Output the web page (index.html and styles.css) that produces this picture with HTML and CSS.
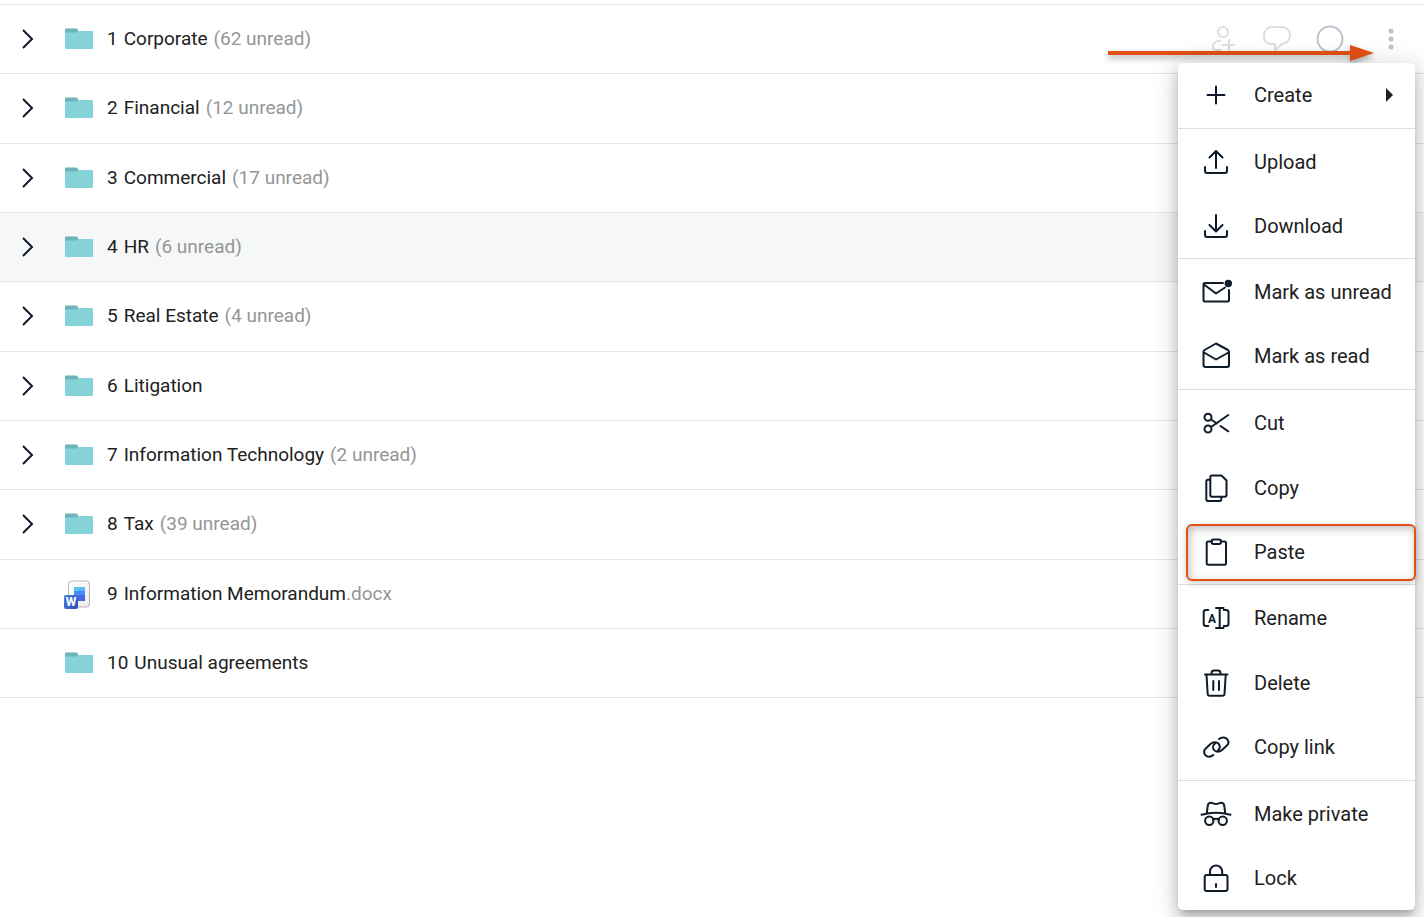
FILE: index.html
```
<!DOCTYPE html>
<html lang="en">
<head>
    <meta charset="UTF-8">
    <meta name="viewport" content="width=device-width, initial-scale=1.0">
    <title>Documents</title>
    <link rel="stylesheet" href="styles.css">
</head>
<body>
    <!-- Shared icons -->
    <svg class="sprite" aria-hidden="true">
        <symbol id="chevron" viewBox="0 0 12 20"><path d="M1 1l9 9-9 9" fill="none" stroke="#0f1a2b" stroke-width="2"/></symbol>
        <symbol id="folder" viewBox="0 0 30 22">
            <path d="M1 2h12l1 1h14a1 1 0 0 1 1 1v16a1 1 0 0 1-1 1H2a1 1 0 0 1-1-1z" fill="#84d3d9"/>
            <path d="M2 0.500h10a2 2 0 0 1 2 2v1l-2 1H1v-3a1 1 0 0 1 1-1z" fill="#6db4ba"/>
        </symbol>
    </svg>

    <!-- Folder list -->
    <ul class="list">
        <li class="row">
            <button class="toggle" aria-label="Expand"><svg><use href="#chevron"/></svg></button>
            <svg class="folder"><use href="#folder"/></svg>
            <span class="number">1</span><span class="name">Corporate</span><span class="unread">(62 unread)</span>
            <div class="actions">
                <button aria-label="Assign"><svg viewBox="0 0 28 28"><circle cx="13" cy="7" r="5"/><path d="M11 16H9c-4 0-6 3-6 6 0 2 1 3 3 3h5M19 14v13M12 20h13"/></svg></button>
                <button aria-label="Comment"><svg viewBox="0 0 28 28"><path d="M9 2h10a8 8 0 0 1 8 8c0 5-3 8-8 9l-7 6v-6H9a7 7 0 0 1-8-8c0-5 3-9 8-9z"/></svg></button>
                <button class="status" aria-label="Status"><svg viewBox="0 0 28 28"><circle cx="14" cy="14" r="12.5"/></svg></button>
                <button class="more" aria-label="More"><svg viewBox="0 0 28 28"><circle cx="14" cy="6" r="2.5"/><circle cx="14" cy="14" r="2.5"/><circle cx="14" cy="22" r="2.5"/></svg></button>
            </div>
        </li>
        <li class="row">
            <button class="toggle" aria-label="Expand"><svg><use href="#chevron"/></svg></button>
            <svg class="folder"><use href="#folder"/></svg>
            <span class="number">2</span><span class="name">Financial</span><span class="unread">(12 unread)</span>
        </li>
        <li class="row">
            <button class="toggle" aria-label="Expand"><svg><use href="#chevron"/></svg></button>
            <svg class="folder"><use href="#folder"/></svg>
            <span class="number">3</span><span class="name">Commercial</span><span class="unread">(17 unread)</span>
        </li>
        <li class="row active">
            <button class="toggle" aria-label="Expand"><svg><use href="#chevron"/></svg></button>
            <svg class="folder"><use href="#folder"/></svg>
            <span class="number">4</span><span class="name">HR</span><span class="unread">(6 unread)</span>
        </li>
        <li class="row">
            <button class="toggle" aria-label="Expand"><svg><use href="#chevron"/></svg></button>
            <svg class="folder"><use href="#folder"/></svg>
            <span class="number">5</span><span class="name">Real Estate</span><span class="unread">(4 unread)</span>
        </li>
        <li class="row">
            <button class="toggle" aria-label="Expand"><svg><use href="#chevron"/></svg></button>
            <svg class="folder"><use href="#folder"/></svg>
            <span class="number">6</span><span class="name">Litigation</span>
        </li>
        <li class="row">
            <button class="toggle" aria-label="Expand"><svg><use href="#chevron"/></svg></button>
            <svg class="folder"><use href="#folder"/></svg>
            <span class="number">7</span><span class="name">Information Technology</span><span class="unread">(2 unread)</span>
        </li>
        <li class="row">
            <button class="toggle" aria-label="Expand"><svg><use href="#chevron"/></svg></button>
            <svg class="folder"><use href="#folder"/></svg>
            <span class="number">8</span><span class="name">Tax</span><span class="unread">(39 unread)</span>
        </li>
        <li class="row">
            <span class="toggle"></span>
            <svg class="word" viewBox="0 0 30 30">
                <defs>
                    <linearGradient id="page" x1="0" y1="0" x2="1" y2="1"><stop offset="0" stop-color="#fff"/><stop offset="1" stop-color="#ececec"/></linearGradient>
                    <linearGradient id="badge" x1="0" y1="0" x2="1" y2="1"><stop offset="0" stop-color="#4b7de0"/><stop offset="1" stop-color="#2c4fb5"/></linearGradient>
                </defs>
                <rect x="4.5" y="2" width="21" height="26" rx="3" fill="url(#page)" stroke="#b5b5b5"/>
                <path d="M10 8h11v5H10z" fill="#58c4f8"/>
                <path d="M15 8h6v5h-6z" fill="#62b5fa"/>
                <path d="M10 12h11v5H10z" fill="#4a8cf5"/>
                <path d="M14 16h7v6h-7z" fill="#3f66ec"/>
                <rect x="0" y="16" width="14" height="14" rx="2" fill="url(#badge)"/>
                <text x="7" y="27" class="word-letter">W</text>
            </svg>
            <span class="number">9</span><span class="name">Information Memorandum</span><span class="ext">.docx</span>
        </li>
        <li class="row">
            <span class="toggle"></span>
            <svg class="folder"><use href="#folder"/></svg>
            <span class="number">10</span><span class="name">Unusual agreements</span>
        </li>
    </ul>

    <!-- Pointer to the row menu -->
    <svg class="arrow" viewBox="0 0 268 20" aria-hidden="true"><path d="M1 8h242V2l24 8-24 8v-6H1z" fill="#e25015"/></svg>

    <!-- Context menu -->
    <div class="menu" role="menu">
        <div class="group">
            <button class="item" role="menuitem"><svg viewBox="0 0 32 32"><path d="M16 7.500v17M7.500 16h17"/></svg>Create<span class="caret"></span></button>
        </div>
        <div class="group">
            <button class="item" role="menuitem"><svg viewBox="0 0 32 32"><path d="M16 22V5M9.500 11.500L16 5l6.500 6.500M5 21v4q0 2 2 2h18q2 0 2-2v-4"/></svg>Upload</button>
            <button class="item" role="menuitem"><svg viewBox="0 0 32 32"><path d="M16 5v16M9.500 15L16 21.500l6.500-6.500M5 21v4q0 2 2 2h18q2 0 2-2v-4"/></svg>Download</button>
        </div>
        <div class="group">
            <button class="item" role="menuitem"><svg viewBox="0 0 32 32"><path d="M23 7H5Q3.500 7 3.500 8.500v15.500q0 1.500 1.500 1.500h22.500q1.500 0 1.500-1.500V14M4 8.500l12 9 9-6"/><circle class="solid" cx="28.300" cy="7.500" r="3.700"/></svg>Mark as unread</button>
            <button class="item" role="menuitem"><svg viewBox="0 0 32 32"><path d="M16 3.500L4.500 10q-1 .6-1 2v13q0 2 2 2h21.500q2 0 2-2V12q0-1.400-1-2zM4 12.500l12 7 12.500-7"/></svg>Mark as read</button>
        </div>
        <div class="group">
            <button class="item" role="menuitem"><svg viewBox="0 0 32 32"><circle cx="8" cy="10.300" r="3.500"/><circle cx="8" cy="22" r="3.500"/><path d="M11 20L28.300 8M11 12.500l6 4M20.500 19l7.800 5.300"/></svg>Cut</button>
            <button class="item" role="menuitem"><svg viewBox="0 0 32 32"><path d="M12 3.500h9.500l5 5V23q0 1.700-1.700 1.700H12q-1.700 0-1.700-1.700V5.200q0-1.700 1.700-1.700zM10 7.700H8q-1.700 0-1.700 1.700v17.800q0 1.700 1.700 1.700h11.500q1.800 0 1.800-1.700V25"/></svg>Copy</button>
            <button class="item marked" role="menuitem"><svg viewBox="0 0 32 32"><path d="M12 5.500H8.200q-1.500 0-1.500 1.500v20.300q0 1.500 1.500 1.500h16.300q1.500 0 1.500-1.500V7q0-1.500-1.500-1.500H21"/><rect x="11.500" y="3.500" width="9.500" height="4.500" rx="2"/></svg>Paste</button>
        </div>
        <div class="group">
            <button class="item" role="menuitem"><svg viewBox="0 0 32 32"><path d="M8.300 8H6Q3.700 8 3.700 10.300v11.400Q3.700 24 6 24h2.300M23.700 8H26q2.500 0 2.500 2.300v11.400Q28.500 24 26 24h-2.300M19.700 6v20M16 6h7.500M16 26h7.500"/><text x="12" y="21" class="icon-letter">A</text></svg>Rename</button>
            <button class="item" role="menuitem"><svg viewBox="0 0 32 32"><path d="M5 7.500h22.500M11.500 7v-1q0-2.500 2.500-2.500h4q2.500 0 2.500 2.500v1M6.500 8l1.200 19q.1 1.800 2 1.800h12.800q1.900 0 2-1.800l1.200-19M13.300 14v9M19 14v9"/></svg>Delete</button>
            <button class="item" role="menuitem"><svg viewBox="0 0 32 32"><path d="M13.300 24C10.500 26.500 6.500 26 5 23.700 3.600 21.500 4 19 6 17.200l4.800-4.500c2.200-1.900 6.200-1.900 8 .3 1.700 2.500 1.200 5-1.300 7M19 8c2.500-2.200 6.500-2 8.300.3 1.700 2.200 1.300 4.700-.7 6.500l-4.800 4.500c-2.300 2-6 2-7.800-.3-1.700-2.200-1-5 1.200-6.800"/></svg>Copy link</button>
        </div>
        <div class="group">
            <button class="item" role="menuitem"><svg viewBox="0 0 32 32"><path d="M1.500 16.700q14.500-4 29 0M6.800 15l1-7.500q.4-2.800 3-2.800c2 0 3 1.300 5.200 1.300s3.200-1.300 5.200-1.300q2.600 0 3 2.800l1 7.500M13 21.500q3-1.500 6 0"/><circle cx="9.300" cy="22.700" r="4.200"/><circle cx="22.700" cy="22.700" r="4.200"/></svg>Make private</button>
            <button class="item" role="menuitem"><svg viewBox="0 0 32 32"><rect x="4.700" y="13" width="22.800" height="16" rx="2"/><path d="M10 13V9.500a6.100 6.100 0 0 1 12.200 0V13M16 22v3"/></svg>Lock</button>
        </div>
    </div>
</body>
</html>
```

FILE: styles.css
```
body {
    position: relative;
    box-sizing: border-box;
    min-height: 100vh;
    margin: 0;
    padding-top: 4px;
    font-family: Roboto, sans-serif;
    font-size: 19px;
    line-height: 24px;
    color: #212121;
    background-color: #fff;
}
button {
    padding: 0;
    border: none;
    background: none;
    font: inherit;
    color: inherit;
    cursor: pointer;
}
svg {
    display: block;
}
.sprite {
    position: absolute;
    width: 0;
    height: 0;
}

/* Folder list */
.list {
    margin: 0;
    padding: 0;
    list-style: none;
    border-top: 1px solid #e4e6e6;
}
.row {
    display: flex;
    align-items: center;
    box-sizing: border-box;
    height: 69px;
    padding: 0 20px;
    border-bottom: 1px solid #e4e6e6;
}
.row:nth-child(3n+2) {
    height: 70px;
    padding-bottom: 1px;
}
.row.active {
    background-color: #f6f8f8;
}
.toggle {
    width: 44px;
}
.toggle svg {
    width: 12px;
    height: 20px;
    margin-left: 2px;
}
.folder {
    width: 30px;
    height: 22px;
    margin-right: 13px;
}
.word {
    width: 30px;
    height: 30px;
    margin-right: 13px;
}
.word-letter {
    font-size: 12px;
    font-weight: 700;
    text-anchor: middle;
    fill: #fff;
}
.number {
    margin-right: 6px;
}
.unread {
    margin-left: 6px;
}
.unread,
.ext {
    color: #949696;
}
.actions {
    display: flex;
    gap: 25px;
    margin-left: auto;
}
.actions svg {
    width: 28px;
    height: 28px;
    fill: none;
    stroke: #dcdedf;
    stroke-width: 2;
}
.actions .status svg {
    stroke: #bcc3cf;
}
.actions .more {
    margin-left: 8px;
    margin-right: -1px;
}
.actions .more svg {
    fill: #c0c2c5;
    stroke: none;
}

.arrow {
    position: absolute;
    top: 43px;
    right: 49px;
    width: 268px;
    height: 20px;
    overflow: visible;
    filter: drop-shadow(0 3px 3px rgba(0, 0, 0, 0.35));
}

/* Context menu */
.menu {
    position: absolute;
    top: 63px;
    right: 9px;
    width: 237px;
    border-radius: 5px;
    background-color: #fff;
    font-size: 20px;
    box-shadow: 0 5px 6px -3px rgba(0, 0, 0, 0.2), 0 10px 14px 1px rgba(0, 0, 0, 0.14), 0 4px 24px 4px rgba(0, 0, 0, 0.14);
}
.group {
    border-bottom: 1px solid #dedede;
}
.group:nth-child(odd) {
    padding-bottom: 1px;
}
.group:last-child {
    border-bottom: none;
}
.item {
    display: flex;
    align-items: center;
    position: relative;
    width: 100%;
    height: 65px;
    padding: 0 22px;
    text-align: left;
    white-space: nowrap;
}
.item:last-child {
    height: 64px;
}
.item svg {
    flex: none;
    width: 32px;
    height: 32px;
    margin-right: 22px;
    fill: none;
    stroke: #0f1a2b;
    stroke-width: 2;
    stroke-linecap: round;
    stroke-linejoin: round;
}
.item .solid {
    fill: #0f1a2b;
    stroke: none;
}
.item .icon-letter {
    font-size: 12px;
    font-weight: 700;
    text-anchor: middle;
    fill: #0f1a2b;
    stroke: none;
}
.caret {
    margin-left: auto;
    border: 7px solid transparent;
    border-left-color: #212121;
    border-right: none;
}
/* Highlight frame */
.marked::after {
    content: "";
    position: absolute;
    top: 4px;
    right: -1px;
    bottom: 3px;
    left: 8px;
    border: 2px solid #e25015;
    border-radius: 6px;
    box-shadow: 0 2px 6px rgba(0, 0, 0, 0.2), inset 2px 3px 8px rgba(0, 0, 0, 0.25);
}
```
